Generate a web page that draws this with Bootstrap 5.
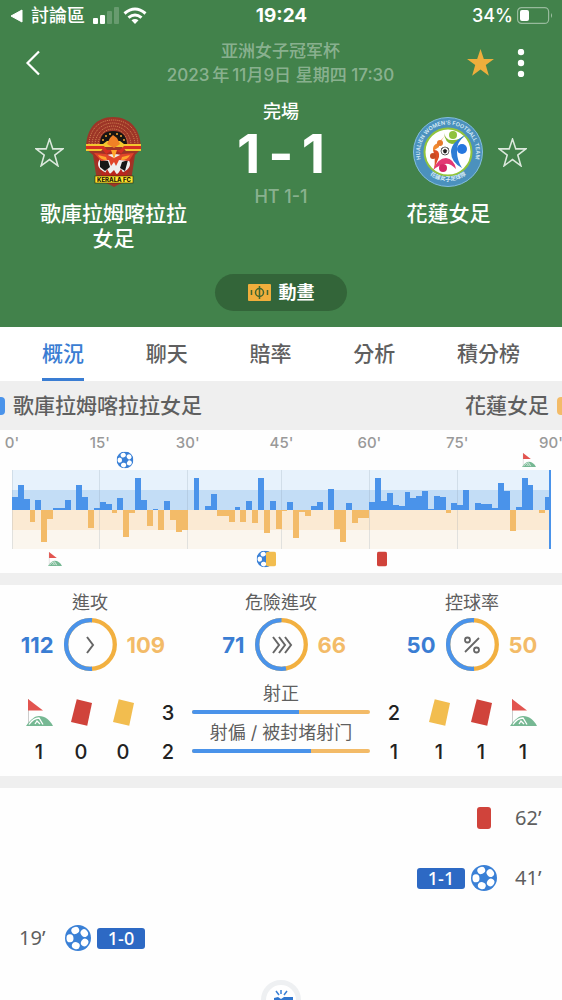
<!DOCTYPE html>
<html lang="zh-Hant">
<head>
<meta charset="utf-8">
<meta name="viewport" content="width=device-width, initial-scale=1">
<title>歌庫拉姆喀拉拉女足 1-1 花蓮女足</title>
<link href="https://cdn.jsdelivr.net/npm/bootstrap@5.3.0/dist/css/bootstrap.min.css" rel="stylesheet">
<style>
:root{--home:#4a93ea;--away:#f3bb68;--ink:#5f5f5f;--link:#3a7dd3}
body{font-family:Inter,"Noto Sans CJK TC",sans-serif;color:var(--ink);background:#fefefe;line-height:24px}
svg{display:block;flex:none}
button{font-family:inherit}
.hero{background:#42824b;color:#fff}
.statusbar{height:31px;padding:0 9px 0 10px;font-size:18px;font-weight:500;display:grid;grid-template-columns:1fr auto 1fr;align-items:center}
.clock{font-size:19px;font-weight:700}
.icon-btn{border:0;background:none;padding:0;color:inherit}
.titlebar{padding:7px 31px 0 25px;display:grid;grid-template-columns:70px 1fr 65px;align-items:center;height:56px}
.faded{color:rgba(255,255,255,.4)}
.titlebar h1{font-size:17px;font-weight:500;line-height:24px}
.match{padding:13px 35px 0;height:175px}
.team{width:157px;display:grid;grid-template-columns:28px 1fr 28px;align-items:center;justify-items:center;padding-top:17px}
.team h2{grid-column:1/4;font-size:21px;font-weight:500;line-height:25px;margin:14px 0 0;text-align:center}
.state{font-size:18px;font-weight:500}
.score{font-size:54px;font-weight:700;line-height:60px;gap:8px}
.half{font-size:18px;font-weight:500;line-height:26px}
.anim{background:#336539;color:#fff;border:0;border-radius:19px;width:132px;height:37px;font-size:18px;font-weight:700}
.tabs{padding:0 42px;background:#fff}
.tabs a{font-size:21px;font-weight:500;line-height:54px;height:54px;color:var(--ink);text-decoration:none;border-bottom:3px solid transparent}
.tabs a.active{color:var(--link);border-color:var(--link)}
.strip{background:#efefef;height:49px;font-size:21px;font-weight:500}
.chip{width:5px;height:18px}
.chip-home{background:var(--home);border-radius:0 4px 4px 0}
.chip-away{background:var(--away);border-radius:4px 0 0 4px}
.chart{padding:0 11px 0 12px;height:143px}
.axis{display:grid;grid-template-columns:15fr 15fr 16fr 15fr 15fr 16fr 0;font-size:15px;font-weight:500;color:#999;height:20px;padding-top:1px}
.axis span{width:0;display:flex;justify-content:center}
.events{height:20px;position:relative}
.events>svg{position:absolute;top:50%;transform:translate(-50%,-50%)}
.plot{width:100%;height:79px}
.rule{height:12px;background:#efefef}
.totals{padding:8px 10px 0}
.total{width:160px;text-align:center;font-size:18px;line-height:20px}
.duel{display:grid;grid-template-columns:1fr 53px 1fr;gap:10px;align-items:center;font-size:22px;font-weight:700;margin-top:5px}
.duel :first-child{text-align:right;color:var(--link)}
.duel :last-child{text-align:left;color:var(--away)}
.shots{padding:13px 18px 0;height:105px}
.side{display:grid;grid-auto-rows:39px;align-items:center;justify-items:center;padding-top:9px;color:#222;font-size:20px;font-weight:500}
.side.l{grid-template-columns:42px 42px 42px 48px}
.side.r{grid-template-columns:48px 42px 42px 42px}
.bars{font-size:18px;line-height:20px;text-align:center}
.bars .progress{height:4px;background:var(--away);margin:6px 0 9px}
.bars .progress-bar{background:var(--home)}
.feed li{height:60px;padding:0 19px;display:flex;align-items:center}
.feed time{font-family:"Noto Sans",sans-serif;font-size:20px;width:28px;margin-right:18px}
.feed .away{flex-direction:row-reverse}
.feed .away time{margin:0 0 0 18px}
.pill{background:#2d69c4;color:#fff;font:500 18px/21px "Noto Sans",sans-serif;width:48px;border-radius:3px;text-align:center;margin:0 6px}
.whistle{height:20px;width:40px;overflow:hidden}
</style>
</head>
<body class="min-vh-100 position-relative">
<svg width="0" height="0" class="position-absolute" aria-hidden="true">
<defs>
<symbol id="ball" viewBox="0 0 26 26"><circle cx="13" cy="13" r="13" fill="#3a80d6"/><g fill="#fff" transform="translate(13 13)"><ellipse cx="8" rx="3.500" ry="4" transform="rotate(-110)"/><ellipse cx="8" rx="3.500" ry="4" transform="rotate(-38)"/><ellipse cx="8" rx="3.500" ry="4" transform="rotate(34)"/><ellipse cx="8" rx="3.500" ry="4" transform="rotate(106)"/><ellipse cx="8" rx="3.500" ry="4" transform="rotate(178)"/></g></symbol>
<symbol id="corner" viewBox="0 0 27 27"><path d="M2.500 0v25" stroke="#ccc" fill="none"/><path d="M2 0l15 11.500H2z" fill="#e2544f"/><path d="M0 27C5 20 9 17 13 17c6 0 11 4 14 10z" fill="#76b893"/><path d="M3 25.500C6 21 10 19 13 19l4 6.500M9 25l2-3 3 3" stroke="#fff" stroke-width="1.300" fill="none"/></symbol>
<symbol id="card" viewBox="0 0 22 28"><path d="M6 0l16 4-5 24-17-4z" fill="currentColor"/></symbol>
<symbol id="star" viewBox="0 0 28 28"><path d="M14 1l3.200 9.500h9.800l-7.900 6 3 10.300-8.100-6-8.100 6 3-10.300-7.900-6h9.800z"/></symbol>
</defs>
</svg>

<header class="hero pb-3">
  <div class="statusbar">
    <div class="d-flex align-items-center">
      <svg width="13" height="14" viewBox="0 0 13 14"><path d="M1 7L12 1v12z" fill="#fff" stroke="#fff" stroke-linejoin="round"/></svg>
      <span class="mx-2">討論區</span>
      <svg width="26" height="17" viewBox="0 0 26 17" fill="#fff"><rect y="11" width="5" height="6" rx="1"/><rect x="7" y="8" width="5" height="9" rx="1"/><g opacity=".2"><rect x="14" y="4" width="5" height="13" rx="1"/><rect x="21" width="5" height="17" rx="1"/></g></svg>
      <svg class="ms-1" width="24" height="17" viewBox="0 0 24 17" fill="none" stroke="#fff" stroke-width="3"><path d="M1.500 6.500q10.500-9 21 0M5.500 10.700q6.500-5.400 13 0"/><path d="M8.500 13.300q3.500-2.800 7 0L12 17z" fill="#fff" stroke="none"/></svg>
    </div>
    <span class="clock">19:24</span>
    <div class="d-flex align-items-center justify-content-end">
      <span class="me-1">34%</span>
      <svg width="36" height="17" viewBox="0 0 36 17"><rect x=".6" y=".6" width="31" height="15.800" rx="4" fill="none" stroke="#fff" stroke-opacity=".45" stroke-width="1.200"/><rect x="3" y="3" width="9" height="11" rx="2" fill="#fff"/><path d="M34 6v5q2-2.500 0-5" fill="#fff" opacity=".5"/></svg>
    </div>
  </div>
  <div class="titlebar">
    <button class="icon-btn" aria-label="返回"><svg width="16" height="26" viewBox="0 0 16 26"><path d="M14 1.500L2.500 13 14 24.500" fill="none" stroke="#fff" stroke-width="2.200"/></svg></button>
    <h1 class="faded text-center m-0">亚洲女子冠军杯<br>2023&thinsp;年&thinsp;11月9日 星期四 17:30</h1>
    <div class="d-flex justify-content-between align-items-center">
      <button class="icon-btn" aria-label="收藏"><svg width="29" height="29" fill="#efae3c"><use href="#star"/></svg></button>
      <button class="icon-btn" aria-label="更多"><svg width="20" height="28" viewBox="0 0 20 28" fill="#fff"><circle cx="10" cy="3" r="3.200"/><circle cx="10" cy="14" r="3.200"/><circle cx="10" cy="25" r="3.200"/></svg></button>
    </div>
  </div>
  <div class="match d-flex justify-content-between align-items-start">
    <section class="team">
      <button class="icon-btn" aria-label="關注主隊"><svg width="29" height="29" fill="none" stroke="#dbe8dc" stroke-width="1.500"><use href="#star"/></svg></button>
      <svg width="56" height="70" viewBox="0 0 56 70">
        <path d="M0 32C0 12 10 0 27 0s28 12 28 32L49 38 45 64q-9 1-17 6-8-5-17-6L7 38z" fill="#9d3527"/>
        <g fill="none" stroke="#d28553" stroke-width="1" stroke-dasharray="1 1"><path d="M3 27C4 11 14 3 27 3s24 8 25 24M6 27C7 14 16 6 27 6s21 8 22 21M9 27c1-11 9-18 18-18s17 7 18 18M12 27c1-9 7-15 15-15s14 6 15 15"/></g>
        <path d="M14 27q0-13 13-13t14 13z" fill="#161513"/><g fill="#f3a532"><circle cx="17" cy="23" r="1"/><circle cx="20" cy="19" r="1"/><circle cx="24" cy="17" r="1"/><circle cx="31" cy="17" r="1"/><circle cx="35" cy="19" r="1"/><circle cx="38" cy="23" r="1"/></g>
        <path d="M0 27h17l4-3h13l4 3h17v7H40l-4-4H19l-4 4H0z" fill="#f4c62e"/><path d="M0 29h18l3 4h13l4-4h17v3H39l-4 5H20l-4-5H0z" fill="#d52e22"/>
        <path d="M21 27l3-6 3-3 4 3 3 6-6 4z" fill="#f08126"/>
        <path d="M8 36l12 1 8-5 8 5 12-1-5 19H13z" fill="#ad2b20"/>
        <ellipse cx="28" cy="47" rx="16" ry="10" fill="#eee"/><path d="M14 43l8 1 2 6-5 4-5-4zM42 43l-6 2-2 6 5 3z" fill="#171717"/>
        <path d="M8 36l12 1 8 4 8-4 12-1-5 8-10-1-3 6-2-4-3 4-2-6-8 1z" fill="#e0452a"/><path d="M12 38l8 2 1 3q-7 0-9-5M44 38l-8 2-1 3q7 0 9-5M25 33h6l-3 9z" fill="#ffa52c"/>
        <path d="M15 53l4 4 2-5 3 5 4-4 3 5 4-6 3 5 4-4-2 8H16z" fill="#bd251c"/>
        <rect x="9" y="59" width="38" height="7" fill="#ffe52c" stroke="#342a0d" stroke-width=".6"/>
        <text x="28" y="65" text-anchor="middle" font-size="6" font-weight="800" fill="#1d1809">KERALA FC</text>
      </svg>
      <h2>歌庫拉姆喀拉拉女足</h2>
    </section>
    <div class="text-center">
      <div class="state">完場</div>
      <div class="score d-flex justify-content-center"><span>1</span><span>-</span><span>1</span></div>
      <div class="half faded">HT 1-1</div>
    </div>
    <section class="team">
      <span></span>
      <svg width="70" height="70" viewBox="0 0 70 70">
        <defs><path id="arcTop" d="M8 43A28 28 0 1 1 62 43"/><path id="arcBottom" d="M13 55A32 32 0 0 0 57 55"/></defs>
        <circle cx="35" cy="35" r="34.500" fill="#4b91bd" stroke="#83bde1"/><circle cx="35" cy="35" r="23.500" fill="#fff" stroke="#92c43c" stroke-width="2"/>
        <g font-weight="600" fill="#d8ecf7"><text font-size="5.500" text-anchor="middle"><textPath href="#arcTop" startOffset="50%">HUALIEN WOMEN'S FOOTBALL TEAM</textPath></text><text font-size="5.500" text-anchor="middle"><textPath href="#arcBottom" startOffset="50%">花蓮女子足球隊</textPath></text></g>
        <path d="M31 16q2 8 9 7 7 0 11-5-5 9-12 9-7-1-8-11" fill="#86bb35"/><circle cx="40" cy="18" r="4" fill="#8fc23d"/>
        <path d="M53 18q-10 7-9 17 0 8 5 16-11-6-11-16 0-10 15-17" fill="#2e7dd5"/><circle cx="49" cy="32" r="5" fill="#2577df"/>
        <path d="M20 53q5-12 13-12 8 1 10 11-6-6-11-5-6 1-12 6" fill="#e33774"/><circle cx="30" cy="51" r="4" fill="#d42767"/>
        <path d="M20 33q7-1 6 7l-5 12q2-10-1-19" fill="#de4e27"/><circle cx="20" cy="39" r="3" fill="#c74b24"/>
        <path d="M34 17q-9 9-8 13l-6 4q-1-6 5-8z" fill="#f08a30"/><circle cx="27" cy="26" r="3" fill="#e77b2e"/>
        <circle cx="32" cy="34" r="4" fill="#fff" stroke="#333" stroke-width=".7"/><path d="M32 32l2 1.500-1 2.500h-2l-1-2.500zM28 32l2-1M36 32l-2-1M30 38l1-1M34 38l-1-1" fill="#222" stroke="#222" stroke-width=".5"/>
      </svg>
      <button class="icon-btn" aria-label="關注客隊"><svg width="29" height="29" fill="none" stroke="#dbe8dc" stroke-width="1.500"><use href="#star"/></svg></button>
      <h2>花蓮女足</h2>
    </section>
  </div>
  <div class="d-flex justify-content-center pt-2 mt-1">
    <button class="anim d-flex align-items-center justify-content-center gap-2"><svg width="23" height="17" viewBox="0 0 23 17"><rect width="23" height="17" rx="1" fill="#f0ae3c"/><g fill="none" stroke="#42662f" stroke-width="1.500"><circle cx="11.500" cy="8.500" r="4"/><path d="M11.500 2v13M3.500 6v5M19.500 6v5"/></g></svg>動畫</button>
  </div>
</header>

<nav class="tabs d-flex justify-content-between" aria-label="比賽">
  <a href="#overview" class="active" aria-current="page">概況</a><a href="#chat">聊天</a><a href="#odds">賠率</a><a href="#analysis">分析</a><a href="#table">積分榜</a>
</nav>

<main id="overview">
  <div class="strip d-flex align-items-center"><i class="chip chip-home me-2"></i><span class="me-auto">歌庫拉姆喀拉拉女足</span><span class="me-2">花蓮女足</span><i class="chip chip-away"></i></div>

  <section class="chart" aria-label="攻勢圖">
    <div class="axis"><span>0'</span><span>15'</span><span>30'</span><span>45'</span><span>60'</span><span>75'</span><span>90'</span></div>
    <div class="events">
      <svg width="17" height="17" style="left:21%"><use href="#ball"/></svg>
      <svg width="14" height="14" style="left:96%"><use href="#corner"/></svg>
    </div>
    <svg class="plot" viewBox="0 0 920 79" preserveAspectRatio="none" shape-rendering="crispEdges">
      <rect width="920" height="20" fill="#e7f2fc"/><rect y="20" width="920" height="20" fill="#c3ddf6"/><rect y="40" width="920" height="20" fill="#fbead3"/><rect y="60" width="920" height="19" fill="#fbf6ee"/>
      <path d="M0 0v79M150 0v79M300 0v79M460 0v79M610 0v79M760 0v79" stroke="#8296aa" stroke-opacity=".22" vector-effect="non-scaling-stroke"/>
      <path id="homeBars" fill="#4a93ea"/><path id="awayBars" fill="#f3bb68"/>
      <path d="M919 0v79" stroke="#4a93ea" stroke-width="2" vector-effect="non-scaling-stroke"/>
    </svg>
    <div class="events">
      <svg width="14" height="14" style="left:8%"><use href="#corner"/></svg>
      <svg width="17" height="17" style="left:47%"><use href="#ball"/></svg>
      <svg width="10" height="15" style="left:48%"><rect width="10" height="15" rx="2" fill="#f2bd4f"/></svg>
      <svg width="10" height="15" style="left:68.700%"><rect width="10" height="15" rx="2" fill="#d0433b"/></svg>
    </div>
  </section>
  <div class="rule"></div>

  <section class="totals d-flex justify-content-between">
    <div class="total"><div>進攻</div><div class="duel"><span>112</span><svg width="53" height="53" viewBox="0 0 53 53" fill="none"><circle cx="26.500" cy="26.500" r="24.300" stroke="#f2b040" stroke-width="4.300"/><path d="M28 2.250A24.300 24.300 0 1 0 28 50.750" stroke="#4a93ea" stroke-width="4.300"/><path d="M23 19l6 8-6 8" stroke="#666" stroke-width="2"/></svg><span>109</span></div></div>
    <div class="total"><div>危險進攻</div><div class="duel"><span>71</span><svg width="53" height="53" viewBox="0 0 53 53" fill="none"><circle cx="26.500" cy="26.500" r="24.300" stroke="#f2b040" stroke-width="4.300"/><path d="M26.500 2.200A24.300 24.300 0 0 0 26.500 50.800 24.300 24.300 0 0 0 31 50.380" stroke="#4a93ea" stroke-width="4.300"/><path d="M18 19l6 8-6 8M24 19l6 8-6 8M30 19l6 8-6 8" stroke="#666" stroke-width="2"/></svg><span>66</span></div></div>
    <div class="total"><div>控球率</div><div class="duel"><span>50</span><svg width="53" height="53" viewBox="0 0 53 53" fill="none"><circle cx="26.500" cy="26.500" r="24.300" stroke="#f2b040" stroke-width="4.300"/><path d="M28 2.250A24.300 24.300 0 1 0 28 50.750" stroke="#4a93ea" stroke-width="4.300"/><g stroke="#666" stroke-width="1.800"><path d="M33 20L19 34"/><circle cx="21.500" cy="22" r="2.500"/><circle cx="30.500" cy="32" r="2.500"/></g></svg><span>50</span></div></div>
  </section>

  <section class="shots d-flex align-items-start">
    <div class="side l">
      <svg width="27" height="27"><use href="#corner"/></svg><svg width="21" height="27" color="#d0433b"><use href="#card"/></svg><svg width="21" height="27" color="#f2bd4f"><use href="#card"/></svg><span>3</span>
      <span>1</span><span>0</span><span>0</span><span>2</span>
    </div>
    <div class="bars flex-grow-1">
      <div>射正</div><div class="progress"><div class="progress-bar" style="width:60%"></div></div>
      <div>射偏 / 被封堵射门</div><div class="progress"><div class="progress-bar" style="width:66.700%"></div></div>
    </div>
    <div class="side r">
      <span>2</span><svg width="21" height="27" color="#f2bd4f"><use href="#card"/></svg><svg width="21" height="27" color="#d0433b"><use href="#card"/></svg><svg width="27" height="27"><use href="#corner"/></svg>
      <span>1</span><span>1</span><span>1</span><span>1</span>
    </div>
  </section>
  <div class="rule"></div>

  <ul class="feed list-unstyled m-0">
    <li class="away"><time>62’</time><svg width="26" height="24" viewBox="0 0 26 24"><rect x="6" y="1" width="14" height="22" rx="3" fill="#d0433b"/></svg></li>
    <li class="away"><time>41’</time><svg width="26" height="26"><use href="#ball"/></svg><span class="pill">1-1</span></li>
    <li><time>19’</time><svg width="26" height="26"><use href="#ball"/></svg><span class="pill">1-0</span></li>
  </ul>
</main>
<div class="whistle position-absolute bottom-0 start-50 translate-middle-x"><svg width="40" height="40" viewBox="0 0 40 40"><circle cx="20" cy="20" r="17.500" fill="#fff" stroke="#eef0f2" stroke-width="5"/><path d="M15 11l3 4M20 10v4M26 11l-3 4" stroke="#3a80d6" stroke-width="1.500"/><path d="M13 18l4-1 3 2 3-2h9v5H13z" fill="#2f76cf"/></svg></div>

<script src="https://cdn.jsdelivr.net/npm/bootstrap@5.3.0/dist/js/bootstrap.bundle.min.js"></script>
<script>
// Momentum per minute: positive = home pressure, negative = away pressure.
const momentum=[13,25,11,-12,10,-32,-9,2,2,10,0,25,13,-18,2,8,6,-3,12,-27,-3,32,10,-16,1,-20,9,-10,-22,-20,0,32,0,4,16,-6,-6,-12,3,-12,9,-13,32,-23,9,-19,-1,8,-28,-2,-6,4,8,0,21,-19,-32,7,-13,-8,-8,8,32,9,17,5,4,18,12,14,19,1,14,13,-3,7,5,20,0,7,6,6,2,27,19,-21,3,32,25,0,-3,13];
const bars=sign=>momentum.map((v,i)=>v*sign>0?`M${i*10} 40v${-v}h10v${v}z`:'').join('');
homeBars.setAttribute('d',bars(1));
awayBars.setAttribute('d',bars(-1));
</script>
</body>
</html>
